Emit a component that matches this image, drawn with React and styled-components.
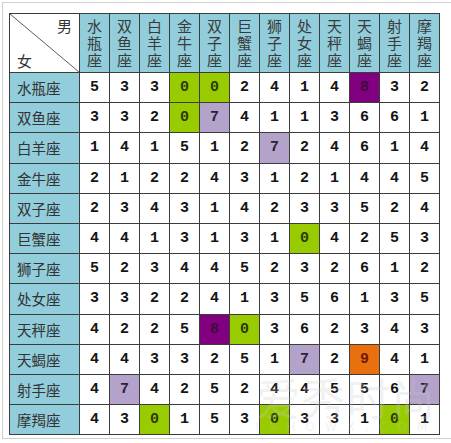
import React from "react";
import styled, { createGlobalStyle } from "styled-components";

const GlobalStyle = createGlobalStyle`
  html, body {
    margin: 0;
    background: #ffffff;
  }
  body {
    font-family: "Noto Sans CJK SC", sans-serif;
  }
`;

const signs = [
  "水瓶座",
  "双鱼座",
  "白羊座",
  "金牛座",
  "双子座",
  "巨蟹座",
  "狮子座",
  "处女座",
  "天秤座",
  "天蝎座",
  "射手座",
  "摩羯座",
];

// g = green, p = purple, l = lilac, o = orange
const grid = [
  ["5", "3", "3", "0g", "0g", "2", "4", "1", "4", "8p", "3", "2"],
  ["3", "3", "2", "0g", "7l", "4", "1", "1", "3", "6", "6", "1"],
  ["1", "4", "1", "5", "1", "2", "7l", "2", "4", "6", "1", "4"],
  ["2", "1", "2", "2", "4", "3", "1", "2", "1", "4", "4", "5"],
  ["2", "3", "4", "3", "1", "4", "2", "3", "3", "5", "2", "4"],
  ["4", "4", "1", "3", "1", "3", "1", "0g", "4", "2", "5", "3"],
  ["5", "2", "3", "4", "4", "5", "2", "3", "2", "6", "1", "2"],
  ["3", "3", "2", "2", "4", "1", "3", "5", "6", "1", "3", "5"],
  ["4", "2", "2", "5", "8p", "0g", "3", "6", "2", "3", "4", "3"],
  ["4", "4", "3", "3", "2", "5", "1", "7l", "2", "9o", "4", "1"],
  ["4", "7l", "4", "2", "5", "2", "4", "4", "5", "5", "6", "7l"],
  ["4", "3", "0g", "1", "5", "3", "0g", "3", "3", "1", "0g", "1"],
];

const tones = {
  w: { bg: "#ffffff", fg: "#141414" },
  g: { bg: "#99cc00", fg: "#2c3a05" },
  p: { bg: "#800080", fg: "#3e0b3e" },
  l: { bg: "#b3a2c9", fg: "#2c2238" },
  o: { bg: "#e8700f", fg: "#6e1a00" },
};

const Frame = styled.div`
  position: relative;
  box-sizing: border-box;
  margin: 2px 0 0 2px;
  width: 449px;
  height: 437px;
  padding: 10px 0 0 6px;
  border: 1px solid #cfcfcf;
  border-right: none;
  overflow: hidden;
`;

const Table = styled.table`
  border-collapse: collapse;
  table-layout: fixed;
  width: 431px;
  border: 1px solid #3c3c3c;
`;

const HeadRow = styled.tr`
  height: 59px;
`;

const BodyRow = styled.tr`
  height: 30.2px;
`;

const Corner = styled.th`
  position: relative;
  width: 69px;
  padding: 0;
  background: #ffffff;
  border: 1px solid #3c3c3c;
  font-weight: normal;
`;

const Slash = styled.svg`
  position: absolute;
  inset: 0;
  width: 100%;
  height: 100%;
`;

const Male = styled.span`
  position: absolute;
  top: 3px;
  right: 7px;
  font-size: 15px;
  line-height: 17px;
  color: #333333;
`;

const Female = styled.span`
  position: absolute;
  bottom: 3px;
  left: 7px;
  font-size: 15px;
  line-height: 17px;
  color: #333333;
`;

const ColHead = styled.th`
  padding: 3px 0 0;
  background: #92cddc;
  border: 1px solid #3c3c3c;
  font-weight: normal;
  font-size: 15px;
  color: #3a3a3a;
  vertical-align: top;
`;

const Char = styled.span`
  display: block;
  line-height: 17px;
  text-align: center;
`;

const RowHead = styled.th`
  padding: 0 0 0 7px;
  background: #92cddc;
  border: 1px solid #3c3c3c;
  font-weight: normal;
  font-size: 14.5px;
  color: #333333;
  text-align: left;
  white-space: nowrap;
`;

const Cell = styled.td`
  padding: 0;
  background: ${(p) => tones[p.$tone].bg};
  color: ${(p) => tones[p.$tone].fg};
  border: 1px solid #3c3c3c;
  text-align: center;
  font-family: "Liberation Mono", "DejaVu Sans Mono", monospace;
  font-weight: bold;
  font-size: 15px;
`;

const Watermark = styled.div`
  position: absolute;
  right: 14px;
  bottom: 4px;
  display: flex;
  flex-direction: column;
  align-items: center;
  color: rgba(200, 200, 200, 0.26);
  pointer-events: none;
`;

const MarkTitle = styled.span`
  font-family: "Noto Sans CJK SC", sans-serif;
  font-size: 44px;
  line-height: 46px;
  letter-spacing: 1px;
`;

const MarkSite = styled.span`
  font-family: "DejaVu Sans", sans-serif;
  font-size: 12px;
  letter-spacing: 10px;
  line-height: 14px;
`;

const App = () => (
  <>
    <GlobalStyle />
    <Frame>
      <Table>
        <thead>
          <HeadRow>
            <Corner>
              <Slash viewBox="0 0 69 59" preserveAspectRatio="none">
                <line x1="0" y1="0" x2="69" y2="59" stroke="#5a5a5a" strokeWidth="1" />
              </Slash>
              <Male>男</Male>
              <Female>女</Female>
            </Corner>
            {signs.map((sign) => (
              <ColHead key={sign}>
                {sign.split("").map((ch, i) => (
                  <Char key={i}>{ch}</Char>
                ))}
              </ColHead>
            ))}
          </HeadRow>
        </thead>
        <tbody>
          {grid.map((row, r) => (
            <BodyRow key={signs[r]}>
              <RowHead>{signs[r]}</RowHead>
              {row.map((v, c) => (
                <Cell key={c} $tone={v[1] || "w"}>
                  {v[0]}
                </Cell>
              ))}
            </BodyRow>
          ))}
        </tbody>
      </Table>
      <Watermark>
        <MarkTitle>爱秀时尚</MarkTitle>
        <MarkSite>ISHOWX.COM</MarkSite>
      </Watermark>
    </Frame>
  </>
);

export default App;
